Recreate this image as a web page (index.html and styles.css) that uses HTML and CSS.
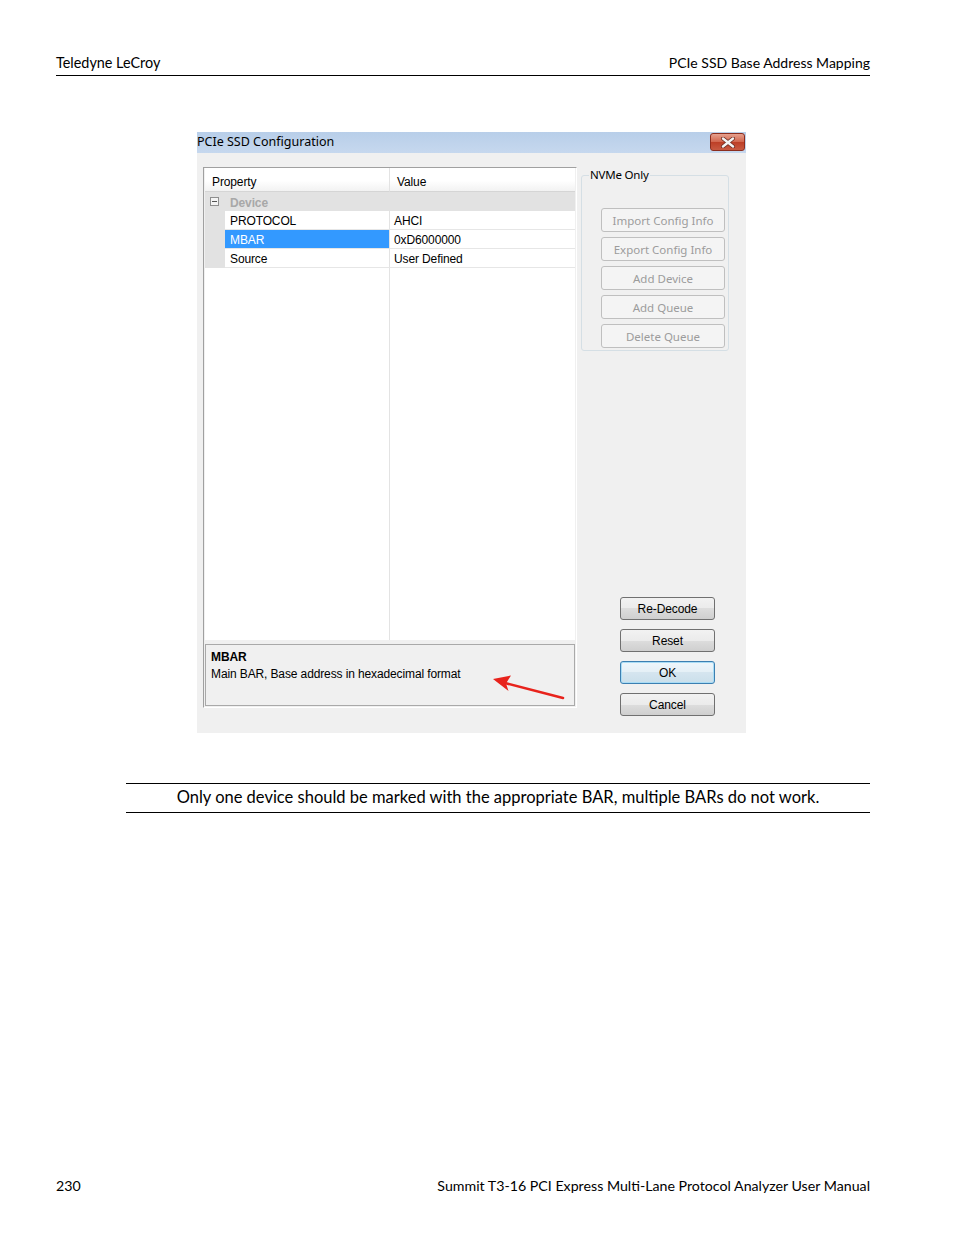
FILE: index.html
```html
<!DOCTYPE html>
<html lang="en">
<head>
<meta charset="utf-8">
<title>PCIe SSD Base Address Mapping</title>
<link rel="stylesheet" href="styles.css">
</head>
<body>
<header class="page-header">
  <span>Teledyne LeCroy</span>
  <span>PCIe SSD Base Address Mapping</span>
</header>

<div class="figure">
  <div class="dialog">
    <div class="titlebar">
      <span class="title">PCIe SSD Configuration</span>
      <div class="close">
        <svg width="16" height="11" viewBox="0 0 16 11">
          <path d="M3 1.5 L13 9.5 M13 1.5 L3 9.5" stroke="#6b2a20" stroke-width="4" stroke-linecap="round"/>
          <path d="M3 1.5 L13 9.5 M13 1.5 L3 9.5" stroke="#f4f4f4" stroke-width="2.4" stroke-linecap="round"/>
        </svg>
      </div>
    </div>
    <div class="dlg-body">
      <div class="grid-frame">
        <div class="grid">
          <div class="gh gh-prop">Property</div>
          <div class="gh gh-val">Value</div>

          <div class="cat">
            <span class="minus"></span>
            <span class="cat-name">Device</span>
          </div>

          <div class="gut"></div>
          <div class="nm">PROTOCOL</div>
          <div class="vl">AHCI</div>

          <div class="gut"></div>
          <div class="nm sel">MBAR</div>
          <div class="vl">0xD6000000</div>

          <div class="gut"></div>
          <div class="nm">Source</div>
          <div class="vl">User Defined</div>

          <div class="fill-l"></div>
          <div class="fill-r"></div>
        </div>
        <div class="desc">
          <div class="desc-title">MBAR</div>
          <div class="desc-text">Main BAR, Base address in hexadecimal format</div>
        </div>
      </div>
      <div class="side">
        <fieldset class="group">
          <legend>NVMe Only</legend>
          <div class="btn disabled">Import Config Info</div>
          <div class="btn disabled">Export Config Info</div>
          <div class="btn disabled">Add Device</div>
          <div class="btn disabled">Add Queue</div>
          <div class="btn disabled">Delete Queue</div>
        </fieldset>
        <div class="actions">
          <div class="btn act">Re-Decode</div>
          <div class="btn act">Reset</div>
          <div class="btn act default">OK</div>
          <div class="btn act">Cancel</div>
        </div>
      </div>
    </div>
    <svg class="arrow" width="549" height="601" viewBox="0 0 549 601">
      <line x1="366" y1="566" x2="308" y2="551" stroke="#e8231c" stroke-width="2.6" stroke-linecap="round"/>
      <polygon points="296,547 314,543.5 309,551.5 311.5,559" fill="#e8231c"/>
    </svg>
  </div>
</div>

<div class="note">Only one device should be marked with the appropriate BAR, multiple BARs do not work.</div>

<footer class="page-footer">
  <span>230</span>
  <span>Summit T3-16 PCI Express Multi-Lane Protocol Analyzer User Manual</span>
</footer>
</body>
</html>
```

FILE: styles.css
```css
* { box-sizing: border-box; }

html, body { margin: 0; padding: 0; }

body {
  width: 954px;
  height: 1235px;
  display: flex;
  flex-direction: column;
  font-family: Lato, "Open Sans", sans-serif;
  color: #000;
  background: #fff;
}

.page-header {
  margin: 0 84px 0 56px;
  padding-top: 54px;
  padding-bottom: 3px;
  border-bottom: 1px solid #000;
  display: flex;
  justify-content: space-between;
  font-size: 14px;
  line-height: 18px;
}

.page-header span:first-child {
  font-size: 14.4px;
}

.figure {
  margin: 56px 0 0 197px;
}

.dialog {
  position: relative;
  width: 549px;
  height: 601px;
  background: #f0f0f0;
  font-family: "Liberation Sans", Arial, sans-serif;
  font-size: 12px;
  letter-spacing: -0.12px;
}

.titlebar {
  height: 21px;
  display: flex;
  justify-content: space-between;
  align-items: flex-start;
  background: linear-gradient(#b8cee9, #c6d8ee);
  overflow: hidden;
}

.title {
  font-family: "Noto Sans", sans-serif;
  font-size: 12.5px;
  letter-spacing: 0;
  line-height: 20px;
  margin-left: 0;
  color: #000;
}

.close {
  width: 35px;
  height: 18px;
  margin: 1px 1px 0 0;
  border: 1px solid #8b2d1e;
  border-radius: 3px;
  background: linear-gradient(#e6a08e, #d2674f 48%, #bd3f27 52%, #c85a42);
  display: flex;
  align-items: center;
  justify-content: center;
}

.dlg-body {
  display: flex;
  height: 580px;
  padding-left: 6px;
}

.grid-frame {
  margin-top: 14px;
  width: 374px;
  height: 541px;
  border: 1px solid;
  border-color: #a0a0a0 #ffffff #ffffff #a0a0a0;
  padding: 0 1px 1px 1px;
  display: flex;
  flex-direction: column;
}

.grid {
  display: grid;
  grid-template-columns: 20px 164px 186px;
  grid-template-rows: 24px 19px 19px 19px 19px 1fr;
  height: 472px;
  background: #fff;
  line-height: 15px;
}

.gh {
  background: linear-gradient(#ffffff, #ffffff 55%, #f2f2f2);
  border-bottom: 1px solid #d5d5d5;
  padding-top: 6px;
  line-height: 17px;
  padding-left: 7px;
}

.gh-prop { grid-column: 1 / 3; }

.gh-val {
  border-left: 1px solid #e3e3e3;
  padding-left: 7px;
}

.cat {
  grid-column: 1 / 4;
  background: #e2e2e2;
  display: flex;
  align-items: flex-start;
  padding-left: 5px;
}

.minus {
  width: 9px;
  height: 9px;
  margin-top: 5px;
  border: 1px solid #8f8f8f;
  background: #f4f4f4;
  display: flex;
  align-items: center;
  justify-content: center;
}

.minus::after {
  content: "";
  width: 5px;
  height: 1px;
  background: #555;
}

.cat-name {
  margin: 3px 0 0 11px;
  line-height: 16px;
  font-weight: bold;
  color: #a8a8a8;
}

.gut { background: #e2e2e2; }

.nm {
  padding: 3px 0 0 5px;
  border-bottom: 1px solid #e6e6e6;
}

.nm.sel {
  background: #3399ff;
  color: #fff;
}

.vl {
  border-left: 1px solid #e3e3e3;
  border-bottom: 1px solid #e6e6e6;
  padding: 3px 0 0 4px;
}

.fill-l { grid-column: 1 / 3; }

.fill-r { border-left: 1px solid #e3e3e3; }

.desc {
  margin-top: 4px;
  height: 62px;
  border: 1px solid #a9a9a9;
  padding: 4px 5px;
  line-height: 17px;
}

.desc-title { font-weight: bold; }

.side {
  width: 169px;
  display: flex;
  flex-direction: column;
  padding-top: 15px;
  padding-bottom: 17px;
}

.group {
  margin: 0 0 0 4px;
  width: 148px;
  border: 1px solid #d5dfe5;
  border-radius: 3px;
  padding: 26px 0 2px 19px;
  display: flex;
  flex-direction: column;
  gap: 5px;
}

.group legend {
  font-family: "Noto Sans", sans-serif;
  font-size: 11.5px;
  letter-spacing: -0.2px;
  line-height: 14px;
  padding: 0 1px;
  margin-left: -12px;
}

.btn {
  height: 24px;
  width: 124px;
  border: 1px solid #707070;
  border-radius: 3px;
  font-family: "Noto Sans", sans-serif;
  font-size: 11.5px;
  letter-spacing: 0;
  display: flex;
  align-items: center;
  justify-content: center;
  background: linear-gradient(#f2f2f2, #ebebeb 50%, #dddddd 50%, #cfcfcf);
}

.btn.disabled {
  border-color: #bfbfbf;
  background: #f4f4f4;
  color: #9c9c9c;
}

.actions {
  margin-top: auto;
  margin-left: 43px;
  display: flex;
  flex-direction: column;
  gap: 9px;
}

.btn.act {
  width: 95px;
  height: 23px;
  font-family: "Liberation Sans", Arial, sans-serif;
  font-size: 12px;
  letter-spacing: -0.1px;
}

.btn.default {
  border-color: #3c7fb1;
  box-shadow: inset 0 0 0 1px #a9dcf5;
  background: linear-gradient(#eef6fb, #e4eff6 50%, #d5e5ef 50%, #cadfeb);
}

.arrow {
  position: absolute;
  left: 0;
  top: 0;
  pointer-events: none;
}

.note {
  margin: 50px 84px 0 126px;
  border-top: 1px solid #000;
  border-bottom: 1px solid #000;
  height: 30px;
  padding-bottom: 2px;
  text-align: center;
  font-size: 16.5px;
  line-height: 26px;
}

.page-footer {
  margin: auto 84px 0 56px;
  padding-bottom: 40px;
  display: flex;
  justify-content: space-between;
  font-size: 14.2px;
  line-height: 18px;
}
```
